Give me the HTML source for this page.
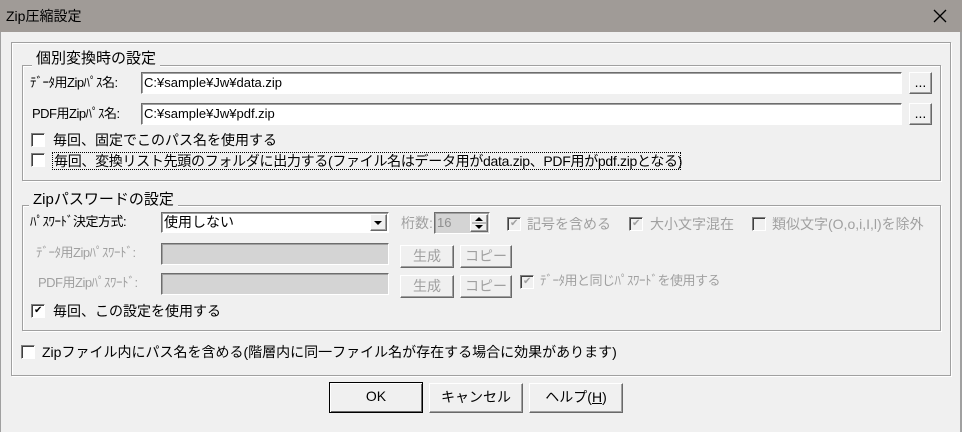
<!DOCTYPE html>
<html><head><meta charset="utf-8"><style>
*{box-sizing:border-box;margin:0;padding:0}
body{width:962px;height:432px;background:#f0f0f0;position:relative;overflow:hidden;font-family:"Liberation Sans","Noto Sans CJK JP",sans-serif;font-size:14px;color:#000}
.a{position:absolute;white-space:nowrap;line-height:16px}
.h{font-size:13px;letter-spacing:-0.5px}
.title{position:absolute;left:0;top:0;width:962px;height:32px;background:#a09b97}
.frame{position:absolute;border:1px solid #a0a0a0;box-shadow:inset 1px 1px 0 #fff,1px 1px 0 #fff}
.grp{position:absolute;border:1px solid #a0a0a0;box-shadow:inset 1px 1px 0 #fff,1px 1px 0 #fff}
.lbl{position:absolute;background:#f0f0f0;padding:0 4px;white-space:nowrap;line-height:16px;font-size:15px}
.inp{position:absolute;background:#fff;border:1px solid;border-color:#6d6d6d #fff #fff #6d6d6d;box-shadow:inset 1px 1px 0 #a0a0a0;padding-left:2px;line-height:19px;white-space:nowrap;font-size:13px}
.dis{background:#d4d4d4}
.btn{position:absolute;background:#f0f0f0;border:1px solid;border-color:#fff #696969 #696969 #fff;box-shadow:inset -1px -1px 0 #a0a0a0;text-align:center;white-space:nowrap}
.cb{position:absolute;width:14px;height:14px;background:#fff;border:1px solid;border-color:#808080 #fff #fff #808080;box-shadow:inset 1px 1px 0 #404040}
.cb.d{background:#f0f0f0}
.g{color:#a0a0a0}
.ck{position:absolute;left:2px;top:0px;font-size:10px;line-height:12px}
</style></head><body>
<div class="title"></div>
<div class="a" style="left:6px;top:8px;font-size:14px">Zip圧縮設定</div>
<svg class="a" style="left:932px;top:8px" width="16" height="16"><path d="M2 2L14 14M14 2L2 14" stroke="#000" stroke-width="1.3"/></svg>
<div style="position:absolute;left:960px;top:32px;width:2px;height:400px;background:#a0a0a0"></div>
<div style="position:absolute;left:0;top:32px;width:1px;height:400px;background:#a0a0a0"></div>
<div class="frame" style="left:11px;top:42px;width:940px;height:334px"></div>

<div class="grp" style="left:22px;top:65px;width:919px;height:116px"></div>
<div class="lbl" style="left:32px;top:51px">個別変換時の設定</div>
<div class="a h" style="left:30px;top:75px">ﾃﾞｰﾀ用Zipﾊﾟｽ名:</div>
<div class="inp" style="left:141px;top:72px;width:761px;height:22px">C:¥sample¥Jw¥data.zip</div>
<div class="btn" style="left:909px;top:72px;width:23px;height:22px;line-height:18px">...</div>
<div class="a h" style="left:32px;top:106px">PDF用Zipﾊﾟｽ名:</div>
<div class="inp" style="left:141px;top:103px;width:761px;height:22px">C:¥sample¥Jw¥pdf.zip</div>
<div class="btn" style="left:909px;top:103px;width:23px;height:22px;line-height:18px">...</div>
<div class="cb" style="left:31px;top:133px"></div>
<div class="a" style="left:53px;top:132px">毎回、固定でこのパス名を使用する</div>
<div class="cb" style="left:31px;top:153px"></div>
<div class="a" style="left:52px;top:152px;border:1px dotted #000;padding:0 1px;width:629px;letter-spacing:-0.3px">毎回、変換リスト先頭のフォルダに出力する(ファイル名はデータ用がdata.zip、PDF用がpdf.zipとなる)</div>

<div class="grp" style="left:22px;top:205px;width:919px;height:126px"></div>
<div class="lbl" style="left:29px;top:192px">Zipパスワードの設定</div>
<div class="a h" style="left:30px;top:214px">ﾊﾟｽﾜｰﾄﾞ決定方式:</div>
<div class="inp" style="left:161px;top:212px;width:228px;height:21px;font-size:14px">使用しない</div>
<div class="btn" style="left:370px;top:214px;width:17px;height:17px"><svg width="15" height="15"><path d="M3 6h8l-4 4z" fill="#000"/></svg></div>
<div class="a g" style="left:401px;top:215px">桁数:</div>
<div class="inp dis" style="left:434px;top:212px;width:56px;height:22px;color:#909090">16</div>
<div class="btn" style="left:470px;top:214px;width:18px;height:18px"><svg width="16" height="16" style="position:absolute;left:0;top:0"><path d="M4 6h8L8 2z M4 10h8L8 14z" fill="#000"/><path d="M1 8h14" stroke="#888"/></svg></div>
<div class="cb d" style="left:507px;top:217px"><span class="ck g">✔</span></div>
<div class="a g" style="left:527px;top:216px">記号を含める</div>
<div class="cb d" style="left:629px;top:217px"><span class="ck g">✔</span></div>
<div class="a g" style="left:650px;top:216px">大小文字混在</div>
<div class="cb d" style="left:752px;top:217px"></div>
<div class="a g" style="left:772px;top:216px">類似文字(O,o,i,I,l)を除外</div>

<div class="a g h" style="left:36px;top:245px">ﾃﾞｰﾀ用Zipﾊﾟｽﾜｰﾄﾞ:</div>
<div class="inp dis" style="left:161px;top:243px;width:228px;height:22px"></div>
<div class="btn g" style="left:400px;top:245px;width:54px;height:23px;line-height:20px">生成</div>
<div class="btn g" style="left:460px;top:245px;width:52px;height:23px;line-height:20px">コピー</div>
<div class="a g h" style="left:38px;top:275px">PDF用Zipﾊﾟｽﾜｰﾄﾞ:</div>
<div class="inp dis" style="left:161px;top:273px;width:228px;height:22px"></div>
<div class="btn g" style="left:400px;top:275px;width:54px;height:23px;line-height:20px">生成</div>
<div class="btn g" style="left:460px;top:275px;width:52px;height:23px;line-height:20px">コピー</div>
<div class="cb d" style="left:520px;top:275px"><span class="ck g">✔</span></div>
<div class="a g h" style="left:540px;top:273px">ﾃﾞｰﾀ用と同じﾊﾟｽﾜｰﾄﾞを使用する</div>
<div class="cb" style="left:31px;top:304px"><span class="ck">✔</span></div>
<div class="a" style="left:53px;top:303px">毎回、この設定を使用する</div>

<div class="cb" style="left:21px;top:345px"></div>
<div class="a" style="left:42px;top:344px">Zipファイル内にパス名を含める(階層内に同一ファイル名が存在する場合に効果があります)</div>

<div class="btn" style="left:329px;top:382px;width:94px;height:31px;line-height:27px;border:1px solid #000;box-shadow:inset 1px 1px 0 #fff,inset -1px -1px 0 #696969">OK</div>
<div class="btn" style="left:429px;top:383px;width:94px;height:30px;line-height:27px">キャンセル</div>
<div class="btn" style="left:529px;top:383px;width:94px;height:30px;line-height:27px">ヘルプ(<u>H</u>)</div>
</body></html>
